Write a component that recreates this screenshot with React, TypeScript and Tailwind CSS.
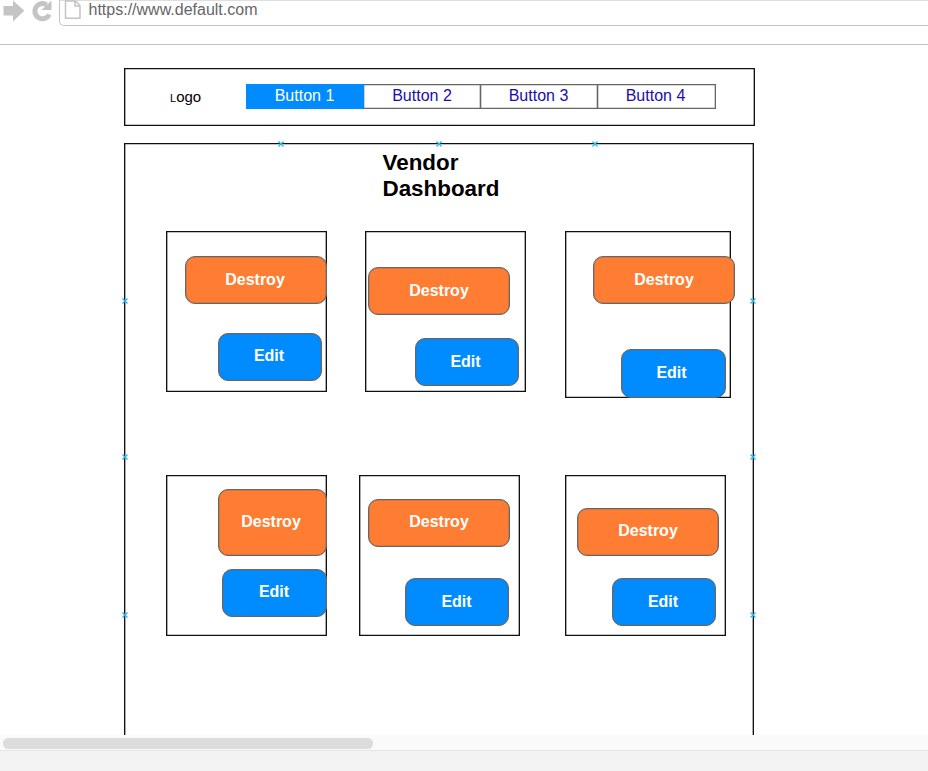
type Shape = { box: string; label: string };
type CardData = { frame: string; destroy: Shape; edit: Shape };

const topCards: CardData[] = [
  {
    frame: "w-[161px] h-[161px]",
    destroy: { box: "mt-[24px] ml-[18px] w-[142px] h-[48px] pr-[2px]", label: "Destroy" },
    edit: { box: "mt-[29px] ml-[51px] w-[104px] h-[48px] pr-[2px] pb-[2px]", label: "Edit" },
  },
  {
    frame: "ml-[38px] w-[161px] h-[161px]",
    destroy: { box: "mt-[35px] ml-[2px] w-[142px] h-[48px]", label: "Destroy" },
    edit: { box: "mt-[23px] ml-[49px] w-[104px] h-[48px] pr-[3px]", label: "Edit" },
  },
  {
    frame: "ml-[39px] w-[166px] h-[167px]",
    destroy: { box: "mt-[24px] ml-[27px] w-[142px] h-[48px]", label: "Destroy" },
    edit: { box: "mt-[45px] ml-[55px] w-[105px] h-[49px] pr-[4px] pb-[2px]", label: "Edit" },
  },
];

const bottomCards: CardData[] = [
  {
    frame: "w-[161px] h-[161px]",
    destroy: { box: "mt-[13px] ml-[51px] w-[109px] h-[67px] pr-[3px] pb-[2px]", label: "Destroy" },
    edit: { box: "mt-[13px] ml-[55px] w-[105px] h-[48px] pr-[1px] pb-[2px]", label: "Edit" },
  },
  {
    frame: "ml-[32px] w-[161px] h-[161px]",
    destroy: { box: "mt-[23px] ml-[8px] w-[142px] h-[48px] pb-[2px]", label: "Destroy" },
    edit: { box: "mt-[31px] ml-[45px] w-[104px] h-[48px] pr-[1px]", label: "Edit" },
  },
  {
    frame: "ml-[45px] w-[161px] h-[161px]",
    destroy: { box: "mt-[32px] ml-[11px] w-[142px] h-[48px] pb-[2px]", label: "Destroy" },
    edit: { box: "mt-[22px] ml-[46px] w-[104px] h-[48px] pr-[2px]", label: "Edit" },
  },
];

function Card({ card }: { card: CardData }) {
  const base =
    "flex shrink-0 items-center justify-center rounded-[10px] border border-[#666] text-[16px] leading-[18px] font-bold text-white shadow-[inset_0_0_0_0.3px_#666]";
  return (
    <div
      className={`flex shrink-0 flex-col items-start border border-[#111] shadow-[inset_0_0_0_0.35px_#111] ${card.frame}`}
    >
      <button className={`${base} bg-[#ff7d33] ${card.destroy.box}`}>{card.destroy.label}</button>
      <button className={`${base} bg-[#008cff] ${card.edit.box}`}>{card.edit.label}</button>
    </div>
  );
}

function Anchor({ at }: { at: string }) {
  return (
    <svg className={`absolute size-[8px] ${at}`} viewBox="0 0 8 8" fill="none">
      <path d="M1.500 1.500l5 5M6.500 1.500l-5 5" stroke="#29b6f2" strokeWidth="1.300" />
    </svg>
  );
}

export default function App() {
  return (
    <div className="flex h-[771px] w-[928px] flex-col overflow-hidden bg-white font-['Liberation_Sans',Arial,sans-serif] text-black">
      <div className="flex h-[45px] shrink-0 items-start border-b border-[#c4c4c4]">
        <svg className="h-[26px] w-[59px] shrink-0" viewBox="0 0 59 26">
          <path d="M3.500 6H13V0.500L24.300 10.700 13 21.500V15.500H3.500z" fill="#c4c4c4" />
          <path d="M49.300 14.500A7.600 7.600 0 1 1 46.600 4.800" fill="none" stroke="#c4c4c4" strokeWidth="5" />
          <path d="M51.500 0.500V10H41.500z" fill="#c4c4c4" />
        </svg>
        <div className="flex h-[26px] flex-1 items-start rounded-bl-[5px] border-t border-b border-l border-[#c4c4c4] border-t-[#dedede]">
          <svg className="mt-[-1px] ml-[4px] h-[20px] w-[18px] shrink-0" viewBox="0 0 18 20" fill="none">
            <path d="M1.500 1h10l4.500 4.500V18.300H1.500zM11 1v5h5" stroke="#c4c4c4" strokeWidth="1.500" />
          </svg>
          <span className="ml-[6.500px] text-[16px] leading-[18px] text-[#666]">https://www.default.com</span>
        </div>
      </div>

      <main className="flex h-[690px] shrink-0 flex-col overflow-hidden pt-[23px] pl-[124px]">
        <header className="flex h-[58px] w-[631px] shrink-0 items-start border border-[#111] shadow-[inset_0_0_0_0.35px_#111]">
          <div className="mt-[19px] ml-[45px] w-[76px] text-[15px] leading-[18px]">
            <span className="text-[11px]">L</span>ogo
          </div>
          <nav className="mt-[15px] flex h-[25px] text-[16px] leading-[21px] text-[#1a0dab]">
            <a className="w-[118px] border border-[#008cff] bg-[#008cff] pr-[1px] text-center text-white">Button 1</a>
            <a className="w-[117px] border-y border-r border-[#666] text-center shadow-[inset_0_0_0_0.3px_#666]">Button 2</a>
            <a className="w-[117px] border-y border-r border-[#666] pr-[1px] text-center shadow-[inset_0_0_0_0.3px_#666]">Button 3</a>
            <a className="w-[118px] border-y border-r border-[#666] pr-[2px] text-center shadow-[inset_0_0_0_0.3px_#666]">Button 4</a>
          </nav>
        </header>

        <section className="relative mt-[17px] flex h-[640px] w-[630px] shrink-0 flex-col border border-[#111] shadow-[inset_0_0_0_0.35px_#111]">
          <h1 className="mt-[6px] ml-[257.500px] w-[130px] text-[22.400px] leading-[26px] font-bold">Vendor Dashboard</h1>
          <div className="mt-[29px] ml-[41px] flex h-[167px] items-start">
            {topCards.map((card, i) => (
              <Card key={i} card={card} />
            ))}
          </div>
          <div className="mt-[77px] ml-[41px] flex items-start">
            {bottomCards.map((card, i) => (
              <Card key={i} card={card} />
            ))}
          </div>
          <Anchor at="left-[152px] top-[-4px]" />
          <Anchor at="left-[310px] top-[-4px]" />
          <Anchor at="left-[466px] top-[-4px]" />
          <Anchor at="left-[-4px] top-[153px]" />
          <Anchor at="left-[-4px] top-[309px]" />
          <Anchor at="left-[-4px] top-[467px]" />
          <Anchor at="right-[-4px] top-[153px]" />
          <Anchor at="right-[-4px] top-[309px]" />
          <Anchor at="right-[-4px] top-[467px]" />
        </section>
      </main>

      <div className="h-[15px] shrink-0 bg-[#fafafa] pt-[3px] pl-[3px]">
        <div className="h-[11px] w-[370px] rounded-full bg-[#dcdcdc]" />
      </div>
      <footer className="flex-1 border-t border-[#e4e4e4] bg-[#f3f3f3]" />
    </div>
  );
}
